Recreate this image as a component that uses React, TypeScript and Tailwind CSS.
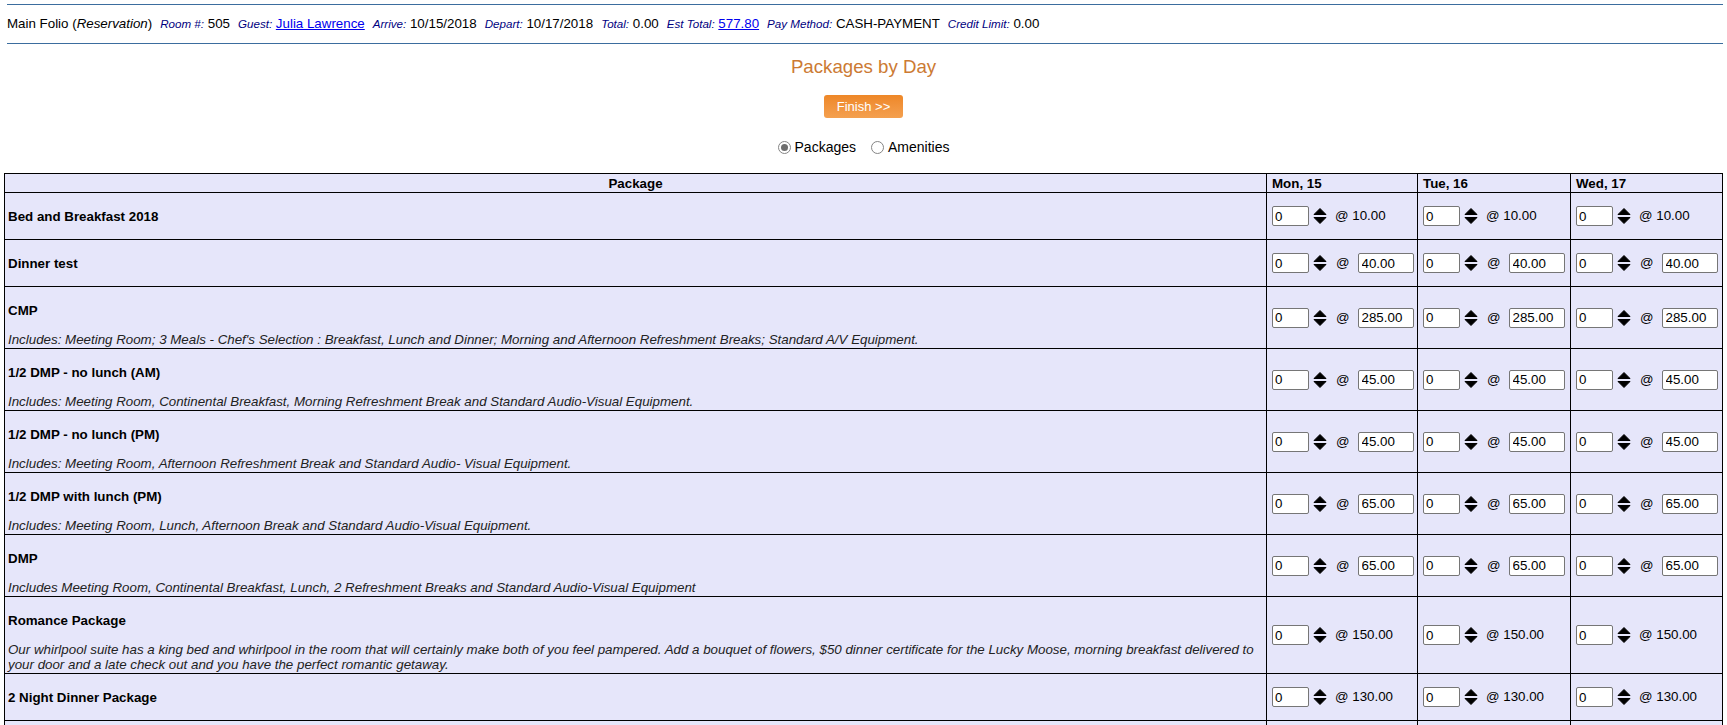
import type { ReactNode } from 'react';

type Pkg = {
  name: string;
  desc?: string;
  price: string;
  editable: boolean;
};

const packages: Pkg[] = [
  { name: 'Bed and Breakfast 2018', price: '10.00', editable: false },
  { name: 'Dinner test', price: '40.00', editable: true },
  {
    name: 'CMP',
    desc: "Includes: Meeting Room; 3 Meals - Chef's Selection : Breakfast, Lunch and Dinner; Morning and Afternoon Refreshment Breaks; Standard A/V Equipment.",
    price: '285.00',
    editable: true,
  },
  {
    name: '1/2 DMP - no lunch (AM)',
    desc: 'Includes: Meeting Room, Continental Breakfast, Morning Refreshment Break and Standard Audio-Visual Equipment.',
    price: '45.00',
    editable: true,
  },
  {
    name: '1/2 DMP - no lunch (PM)',
    desc: 'Includes: Meeting Room, Afternoon Refreshment Break and Standard Audio- Visual Equipment.',
    price: '45.00',
    editable: true,
  },
  {
    name: '1/2 DMP with lunch (PM)',
    desc: 'Includes: Meeting Room, Lunch, Afternoon Break and Standard Audio-Visual Equipment.',
    price: '65.00',
    editable: true,
  },
  {
    name: 'DMP',
    desc: 'Includes Meeting Room, Continental Breakfast, Lunch, 2 Refreshment Breaks and Standard Audio-Visual Equipment',
    price: '65.00',
    editable: true,
  },
  {
    name: 'Romance Package',
    desc: 'Our whirlpool suite has a king bed and whirlpool in the room that will certainly make both of you feel pampered. Add a bouquet of flowers, $50 dinner certificate for the Lucky Moose, morning breakfast delivered to your door and a late check out and you have the perfect romantic getaway.',
    price: '150.00',
    editable: false,
  },
  { name: '2 Night Dinner Package', price: '130.00', editable: false },
  { name: '3 Night Dinner Package', price: '190.00', editable: false },
];

const days = ['Mon, 15', 'Tue, 16', 'Wed, 17'];

function Label({ children }: { children: ReactNode }) {
  return <span className="text-[11.6px] italic text-[#000080]">{children}</span>;
}

function Group({ label, children }: { label: string; children: ReactNode }) {
  return (
    <span className="ml-[8px]">
      <Label>{label}</Label> {children}
    </span>
  );
}

function SortArrows() {
  return (
    <svg width="14" height="18" viewBox="0 0 14 18" className="shrink-0">
      <path d="M7 1.5 L13 7.5 H1 Z" fill="#000" stroke="#000" strokeLinejoin="round" strokeWidth="1" />
      <path d="M1 10.5 H13 L7 16.5 Z" fill="#000" stroke="#000" strokeLinejoin="round" strokeWidth="1" />
    </svg>
  );
}

function Radio({ checked, label }: { checked?: boolean; label: string }) {
  return (
    <label className="flex items-center">
      <span className="flex h-[13px] w-[13px] items-center justify-center rounded-full border border-[#858585] bg-white">
        {checked ? <span className="h-[7px] w-[7px] rounded-full bg-[#6e6e6e]" /> : null}
      </span>
      <span className="ml-[4px]">{label}</span>
    </label>
  );
}

function DayCell({ pkg }: { pkg: Pkg }) {
  return (
    <td className="border border-black pl-[5px] align-middle">
      <div className="flex items-center">
        <input
          readOnly
          value="0"
          className="h-[20px] w-[37px] rounded-[2px] border border-[#767676] bg-white px-[2px] text-[13.33px] text-black outline-none"
        />
        <span className="ml-[4px]">
          <SortArrows />
        </span>
        {pkg.editable ? (
          <>
            <span className="ml-[9px] text-[13.33px]">@</span>
            <input
              readOnly
              value={pkg.price}
              className="ml-[8px] h-[20px] w-[56px] rounded-[2px] border border-[#767676] bg-white px-[3px] text-[13.33px] text-black outline-none"
            />
          </>
        ) : (
          <span className="ml-[8px] text-[13.33px]">@ {pkg.price}</span>
        )}
      </div>
    </td>
  );
}

export default function App() {
  return (
    <div className="min-h-screen bg-white font-['Liberation_Sans',Arial,sans-serif] text-black">
      <div className="pl-[7px] pr-[4px] pt-[4px]">
        <div className="flex h-[40px] items-center border-y border-[#3b6d9e] text-[13.33px] whitespace-nowrap">
          <span>
            Main Folio (<i>Reservation</i>)
          </span>
          <Group label="Room #:">505</Group>
          <Group label="Guest:">
            <a href="#" className="text-[#0000ee] underline">
              Julia Lawrence
            </a>
          </Group>
          <Group label="Arrive:">10/15/2018</Group>
          <Group label="Depart:">10/17/2018</Group>
          <Group label="Total:">0.00</Group>
          <Group label="Est Total:">
            <a href="#" className="text-[#0000ee] underline">
              577.80
            </a>
          </Group>
          <Group label="Pay Method:">CASH-PAYMENT</Group>
          <Group label="Credit Limit:">0.00</Group>
        </div>
      </div>

      <div className="flex flex-col items-center">
        <h1 className="mt-[12px] text-[18.67px] leading-[22px] font-normal text-[#cc7a33]">Packages by Day</h1>
        <button
          type="button"
          className="mt-[17px] h-[23px] w-[79px] rounded-[3px] bg-gradient-to-b from-[#ee8726] to-[#f4a04f] text-[13px] text-white"
        >
          Finish &gt;&gt;
        </button>
        <div className="mt-[19px] flex h-[20px] items-center gap-[15px] text-[14px]">
          <Radio checked label="Packages" />
          <Radio label="Amenities" />
        </div>
      </div>

      <div className="mt-[16px] px-[4px]">
        <table className="w-full table-fixed border-collapse border border-black bg-[#e6e6fa] text-[13.33px]">
          <colgroup>
            <col />
            <col className="w-[151px]" />
            <col className="w-[153px]" />
            <col className="w-[152px]" />
          </colgroup>
          <thead>
            <tr className="h-[19px]">
              <th className="border border-black text-center font-bold leading-[15px]">Package</th>
              {days.map((d) => (
                <th key={d} className="border border-black pl-[5px] text-left font-bold leading-[15px]">
                  {d}
                </th>
              ))}
            </tr>
          </thead>
          <tbody>
            {packages.map((p) => (
              <tr key={p.name}>
                <td className="border border-black px-[3px] align-top">
                  <div className={`mt-[16px] font-bold leading-[15px] ${p.desc ? 'mb-[14px]' : 'mb-[15px]'}`}>
                    {p.name}
                  </div>
                  {p.desc ? (
                    <div className="mb-[1px] text-[13.33px] leading-[15px] italic text-[#222]">{p.desc}</div>
                  ) : null}
                </td>
                {days.map((d) => (
                  <DayCell key={d} pkg={p} />
                ))}
              </tr>
            ))}
          </tbody>
        </table>
      </div>
    </div>
  );
}
